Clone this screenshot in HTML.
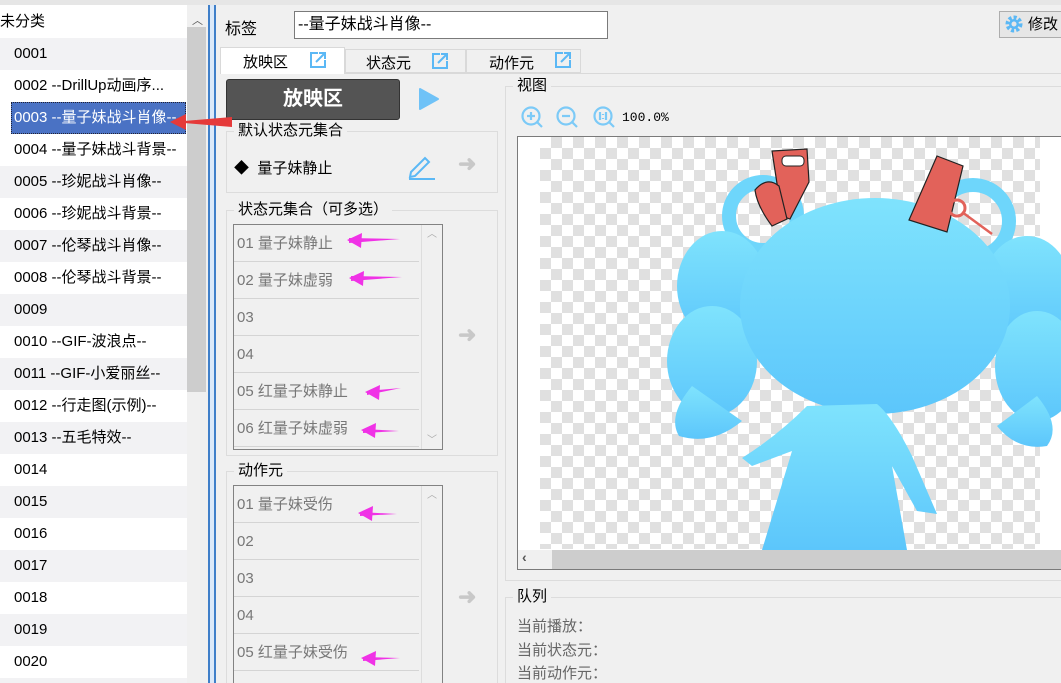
<!DOCTYPE html>
<html><head><meta charset="utf-8"><style>
*{box-sizing:border-box;margin:0;padding:0}
html,body{width:1061px;height:683px;overflow:hidden}
body{background:#f0f0f0;font-family:"Liberation Sans","Noto Sans CJK SC",sans-serif;font-size:15px;color:#000;position:relative}
.a{position:absolute}
.row{position:absolute;left:0;width:187px;height:32px;line-height:32px;padding-left:14px;white-space:nowrap;overflow:hidden;font-size:15px}
.g{background:#f2f2f4}.w{background:#fff}
.grp{position:absolute;border:1px solid #dcdcdc}
.gl{position:absolute;background:#f0f0f0;padding:0 4px;line-height:16px;font-size:15px}
.li{position:absolute;left:0;width:185px;height:37px;line-height:37px;padding-left:3px;color:#777;border-bottom:1px solid #d4d4d4;background:#f0f0f0;font-size:15px}
.arrow{position:absolute;color:#c8c8c8;font-size:22px;font-weight:bold}
</style></head><body>
<div class="a" style="left:0;top:0;width:1061px;height:5px;background:#e6e6e6"></div>
<div class="a" style="left:0;top:5px;width:187px;height:678px;background:#fff"></div>
<div class="row w" style="top:6px;padding-left:0">未分类</div>
<div class="row g" style="top:38px">0001</div>
<div class="row w" style="top:70px">0002 --DrillUp动画序...</div>
<div class="row" style="top:102px;left:11px;width:175px;padding-left:2px;background:#4a72c4;color:#fff;border:1px dotted #223;line-height:30px">0003 --量子妹战斗肖像--</div>
<div class="row w" style="top:134px">0004 --量子妹战斗背景--</div>
<div class="row g" style="top:166px">0005 --珍妮战斗肖像--</div>
<div class="row w" style="top:198px">0006 --珍妮战斗背景--</div>
<div class="row g" style="top:230px">0007 --伦琴战斗肖像--</div>
<div class="row w" style="top:262px">0008 --伦琴战斗背景--</div>
<div class="row g" style="top:294px">0009</div>
<div class="row w" style="top:326px">0010 --GIF-波浪点--</div>
<div class="row g" style="top:358px">0011 --GIF-小爱丽丝--</div>
<div class="row w" style="top:390px">0012 --行走图(示例)--</div>
<div class="row g" style="top:422px">0013 --五毛特效--</div>
<div class="row w" style="top:454px">0014</div>
<div class="row g" style="top:486px">0015</div>
<div class="row w" style="top:518px">0016</div>
<div class="row g" style="top:550px">0017</div>
<div class="row w" style="top:582px">0018</div>
<div class="row g" style="top:614px">0019</div>
<div class="row w" style="top:646px">0020</div>
<div class="row g" style="top:678px"></div>
<div class="a" style="left:187px;top:5px;width:20px;height:678px;background:#f0f0f0"></div>
<div class="a" style="left:192px;top:12px;color:#555;font-size:11px">︿</div>
<div class="a" style="left:187px;top:27px;width:19px;height:365px;background:#cdcdcd"></div>
<div class="a" style="left:208px;top:5px;width:8px;height:678px;background:#dbe9f9;border-left:2px solid #3f7fc9;border-right:2px solid #3f7fc9"></div>

<div class="a" style="left:225px;top:15px;font-size:16px">标签</div>
<div class="a" style="left:294px;top:11px;width:314px;height:28px;background:#fff;border:1px solid #7a7a7a;padding-left:3px;line-height:26px;font-size:16px">--量子妹战斗肖像--</div>
<div class="a" style="left:999px;top:11px;width:70px;height:27px;background:#e6e6e6;border:1px solid #adadad;line-height:25px;padding-left:28px;font-size:15px">修改</div>
<svg class="a" style="left:1004px;top:14px" width="20" height="20" viewBox="0 0 20 20"><circle cx="10" cy="10" r="6.5" fill="none" stroke="#5bb8f5" stroke-width="4" stroke-dasharray="3 2"/><circle cx="10" cy="10" r="5" fill="#5bb8f5"/><circle cx="10" cy="10" r="2.5" fill="#e6e6e6"/></svg>

<div class="a" style="left:220px;top:73px;width:841px;height:610px;background:#f0f0f0;border-top:1px solid #d9d9d9"></div>
<div class="a" style="left:220px;top:47px;width:125px;height:27px;background:#fff;border:1px solid #d9d9d9;border-bottom:none"></div>
<div class="a" style="left:345px;top:49px;width:121px;height:24px;background:#f0f0f0;border:1px solid #d9d9d9"></div>
<div class="a" style="left:466px;top:49px;width:115px;height:24px;background:#f0f0f0;border:1px solid #d9d9d9"></div>
<div class="a" style="left:243px;top:51px;font-size:15px">放映区</div>
<div class="a" style="left:366px;top:52px;font-size:15px">状态元</div>
<div class="a" style="left:489px;top:52px;font-size:15px">动作元</div>
<svg class="a" style="left:0;top:0" width="1061" height="683" fill="none" stroke="#5bb8f5" stroke-width="2">
<g><path d="M318 53h-7v14h14v-7M316 62l9-9M319 53h6v6"/></g>
<g transform="translate(122,1)"><path d="M318 53h-7v14h14v-7M316 62l9-9M319 53h6v6"/></g>
<g transform="translate(245,0)"><path d="M318 53h-7v14h14v-7M316 62l9-9M319 53h6v6"/></g>
</svg>

<div class="a" style="left:226px;top:79px;width:174px;height:41px;background:#545454;border:1px solid #333;border-radius:3px;color:#fff;font-weight:bold;font-size:20px;text-align:center;line-height:39px">放映区</div>
<svg class="a" style="left:418px;top:87px" width="22" height="24"><path d="M2 2 L20 12 L2 22Z" fill="#6fc2f7" stroke="#6fc2f7" stroke-linejoin="round" stroke-width="2"/></svg>

<div class="grp" style="left:226px;top:131px;width:272px;height:62px"></div>
<div class="gl" style="left:234px;top:123px">默认状态元集合</div>
<div class="a" style="left:234px;top:157px;font-size:15px">◆&nbsp; 量子妹静止</div>
<svg class="a" style="left:406px;top:152px" width="32" height="28" fill="none" stroke="#5bb8f5" stroke-width="2"><path d="M5 20 L19 6 L23 10 L9 24 L4 25Z"/><path d="M3 27H29"/></svg>
<div class="arrow" style="left:458px;top:151px">➜</div>

<div class="grp" style="left:226px;top:210px;width:272px;height:246px"></div>
<div class="gl" style="left:234px;top:202px">状态元集合（可多选）</div>
<div class="a" style="left:233px;top:224px;width:210px;height:226px;border:1px solid #828282;background:#f0f0f0;overflow:hidden">
<div class="li" style="top:0">01 量子妹静止</div>
<div class="li" style="top:37px">02 量子妹虚弱</div>
<div class="li" style="top:74px">03</div>
<div class="li" style="top:111px">04</div>
<div class="li" style="top:148px">05 红量子妹静止</div>
<div class="li" style="top:185px">06 红量子妹虚弱</div>
<div class="a" style="left:187px;top:0;width:21px;height:226px;border-left:1px solid #ddd;color:#aaa;font-size:10px;text-align:center">︿<br><span style="position:absolute;left:5px;top:206px">﹀</span></div>
</div>
<div class="arrow" style="left:458px;top:322px">➜</div>

<div class="grp" style="left:226px;top:471px;width:272px;height:220px"></div>
<div class="gl" style="left:234px;top:463px">动作元</div>
<div class="a" style="left:233px;top:485px;width:210px;height:210px;border:1px solid #828282;background:#f0f0f0;overflow:hidden">
<div class="li" style="top:0">01 量子妹受伤</div>
<div class="li" style="top:37px">02</div>
<div class="li" style="top:74px">03</div>
<div class="li" style="top:111px">04</div>
<div class="li" style="top:148px">05 红量子妹受伤</div>
<div class="a" style="left:187px;top:0;width:21px;height:210px;border-left:1px solid #ddd;color:#aaa;font-size:10px;text-align:center">︿</div>
</div>
<div class="arrow" style="left:458px;top:584px">➜</div>

<div class="grp" style="left:505px;top:86px;width:570px;height:495px"></div>
<div class="gl" style="left:513px;top:78px">视图</div>
<svg class="a" style="left:520px;top:105px" width="100" height="26" fill="none" stroke="#7ccaf7" stroke-width="2.2">
<circle cx="11" cy="11" r="8.5"/><path d="M17 17l5 5M7 11h8M11 7v8"/>
<g transform="translate(35,0)"><circle cx="11" cy="11" r="8.5"/><path d="M17 17l5 5M7 11h8"/></g>
<g transform="translate(72,0)"><circle cx="11" cy="11" r="8.5"/><path d="M17 17l5 5M8 7v8M14 7v8M11 9v1M11 13v1"/></g>
</svg>
<div class="a" style="left:622px;top:110px;font-family:'Liberation Mono',monospace;font-size:13px">100.0%</div>
<div class="a" style="left:517px;top:136px;width:550px;height:434px;background:#fff;border:1px solid #7a7a7a"></div>
<div class="a" style="left:540px;top:137px;width:500px;height:412px;background-color:#fff;background-image:conic-gradient(#e0e0e0 25%,#fff 0 50%,#e0e0e0 0 75%,#fff 0);background-size:22px 22px;background-position:0 0"></div>
<svg class="a" style="left:517px;top:136px" width="544" height="414">
<defs><linearGradient id="b" x1="0" y1="0" x2="0" y2="1"><stop offset="0" stop-color="#7fe3fd"/><stop offset="1" stop-color="#5cc6fb"/></linearGradient></defs>
<g fill="url(#b)">
<circle cx="246" cy="80" r="34" fill="none" stroke="#6ed6fb" stroke-width="14"/>
<circle cx="456" cy="85" r="36" fill="none" stroke="#6ed6fb" stroke-width="14"/>
<ellipse cx="205" cy="150" rx="45" ry="55"/>
<ellipse cx="195" cy="225" rx="45" ry="55"/>
<path d="M175 250 Q150 280 162 300 Q195 310 225 285Z"/>
<ellipse cx="510" cy="155" rx="45" ry="55"/>
<ellipse cx="520" cy="230" rx="42" ry="55"/>
<path d="M520 260 Q545 290 530 310 Q500 315 480 290Z"/>
<ellipse cx="358" cy="170" rx="135" ry="108"/>
<path d="M290 270 Q260 300 225 322 L235 330 L275 315 L245 414 H390 L375 330 L400 375 L420 378 L395 320 Q375 280 360 268Z"/>
</g>
<g fill="#e2625a" stroke="#222" stroke-width="1.2">
<path d="M255 15 L290 13 L292 46 L273 83 L265 80Z"/>
<path d="M238 54 Q250 40 262 50 L270 83 L255 90 Q240 70 238 54Z"/>
<path d="M420 20 L446 30 L430 96 L392 84Z"/>
</g>
<rect x="265" y="20" width="22" height="10" rx="4" fill="#fff" stroke="#222"/>
<circle cx="440" cy="72" r="8" fill="none" stroke="#e2625a" stroke-width="3"/>
<path d="M445 76 L475 98" stroke="#e2625a" stroke-width="2.5"/>
</svg>
<div class="a" style="left:518px;top:550px;width:543px;height:19px;background:#f0f0f0"></div>
<div class="a" style="left:552px;top:550px;width:509px;height:19px;background:#cdcdcd"></div>
<div class="a" style="left:522px;top:549px;color:#555;font-size:14px;font-weight:bold">‹</div>

<div class="grp" style="left:505px;top:597px;width:570px;height:100px"></div>
<div class="gl" style="left:513px;top:589px">队列</div>
<div class="a" style="left:517px;top:615px;color:#666;font-size:15px;line-height:23.5px">当前播放：<br>当前状态元：<br>当前动作元：</div>

<svg class="a" style="left:0;top:0" width="1061" height="683">
<polygon points="172,122 232,117 232,127" fill="#e53a3a"/><polygon points="170,122 186,114 186,130" fill="#e53a3a"/>
<g fill="#f032e6">
<polygon points="349,238 400,239 349,243"/><polygon points="347,240 362,233 361,248"/>
<polygon points="351,276 402,277 351,281"/><polygon points="349,278 364,271 363,286"/>
<polygon points="367,391 401,388 367,395"/><polygon points="365,392 380,385 379,400"/>
<polygon points="363,429 399,431 363,433"/><polygon points="361,430 376,423 375,438"/>
<polygon points="360,512 397,514 360,516"/><polygon points="358,513 373,506 372,521"/>
<polygon points="363,657 400,658 363,661"/><polygon points="361,658 376,651 375,666"/>
</g></svg>
</body></html>
